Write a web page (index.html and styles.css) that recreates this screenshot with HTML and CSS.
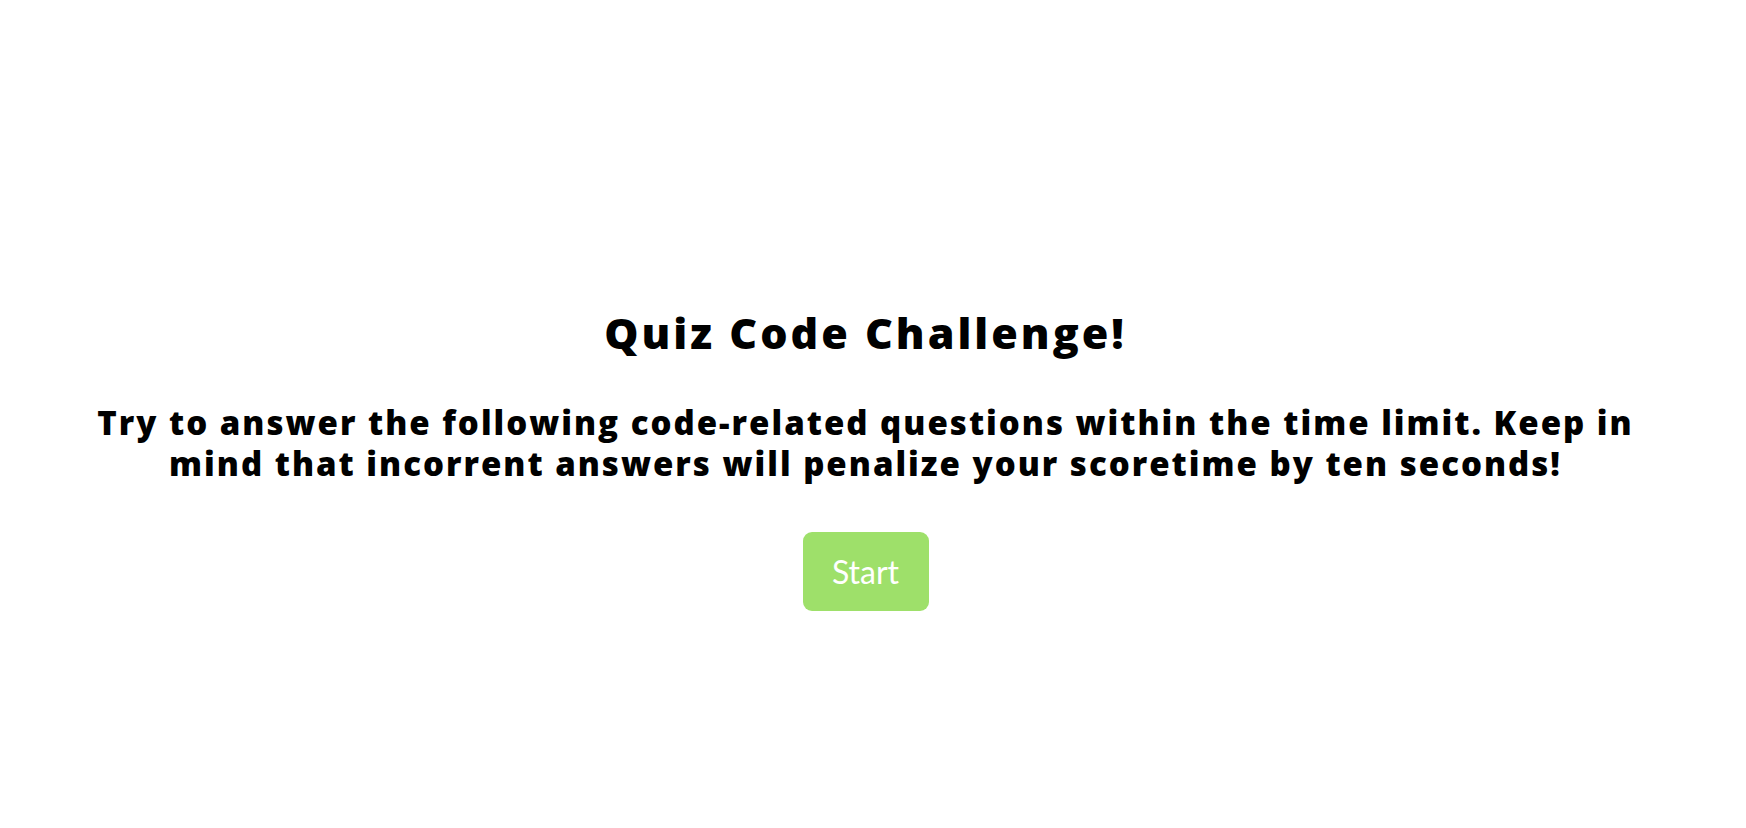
FILE: index.html
```html
<!DOCTYPE html>
<html lang="en">
<head>
<meta charset="utf-8">
<title>Quiz Code Challenge</title>
<link rel="stylesheet" href="styles.css">
</head>
<body>
<main class="intro">
  <h1 class="title">Quiz Code Challenge!</h1>
  <p class="lead">Try to answer the following code-related questions within the time limit. Keep in mind that incorrent answers will penalize your scoretime by ten seconds!</p>
  <button class="start-btn" type="button">Start</button>
</main>
</body>
</html>
```

FILE: styles.css
```css
html, body {
  margin: 0;
  padding: 0;
  background: #ffffff;
}

body {
  font-family: "Open Sans", "Liberation Sans", sans-serif;
  color: #000000;
  font-variant-ligatures: none;
}

.intro {
  display: flex;
  flex-direction: column;
  align-items: center;
  padding: 307px 15px 0 0;
}

.title {
  margin: 0;
  font-size: 43px;
  line-height: 52px;
  font-weight: 800;
  letter-spacing: 3px;
}

.lead {
  margin: 43px 0 0 0;
  max-width: 1570px;
  font-size: 33px;
  line-height: 41px;
  font-weight: 800;
  letter-spacing: 2px;
  text-align: center;
}

.start-btn {
  margin-top: 48px;
  width: 126px;
  height: 79px;
  padding: 0;
  border: none;
  border-radius: 9px;
  background: #9ee06a;
  color: #ffffff;
  font-family: "Lato", "Liberation Sans", sans-serif;
  font-size: 32px;
  font-weight: 400;
  cursor: pointer;
}
```
